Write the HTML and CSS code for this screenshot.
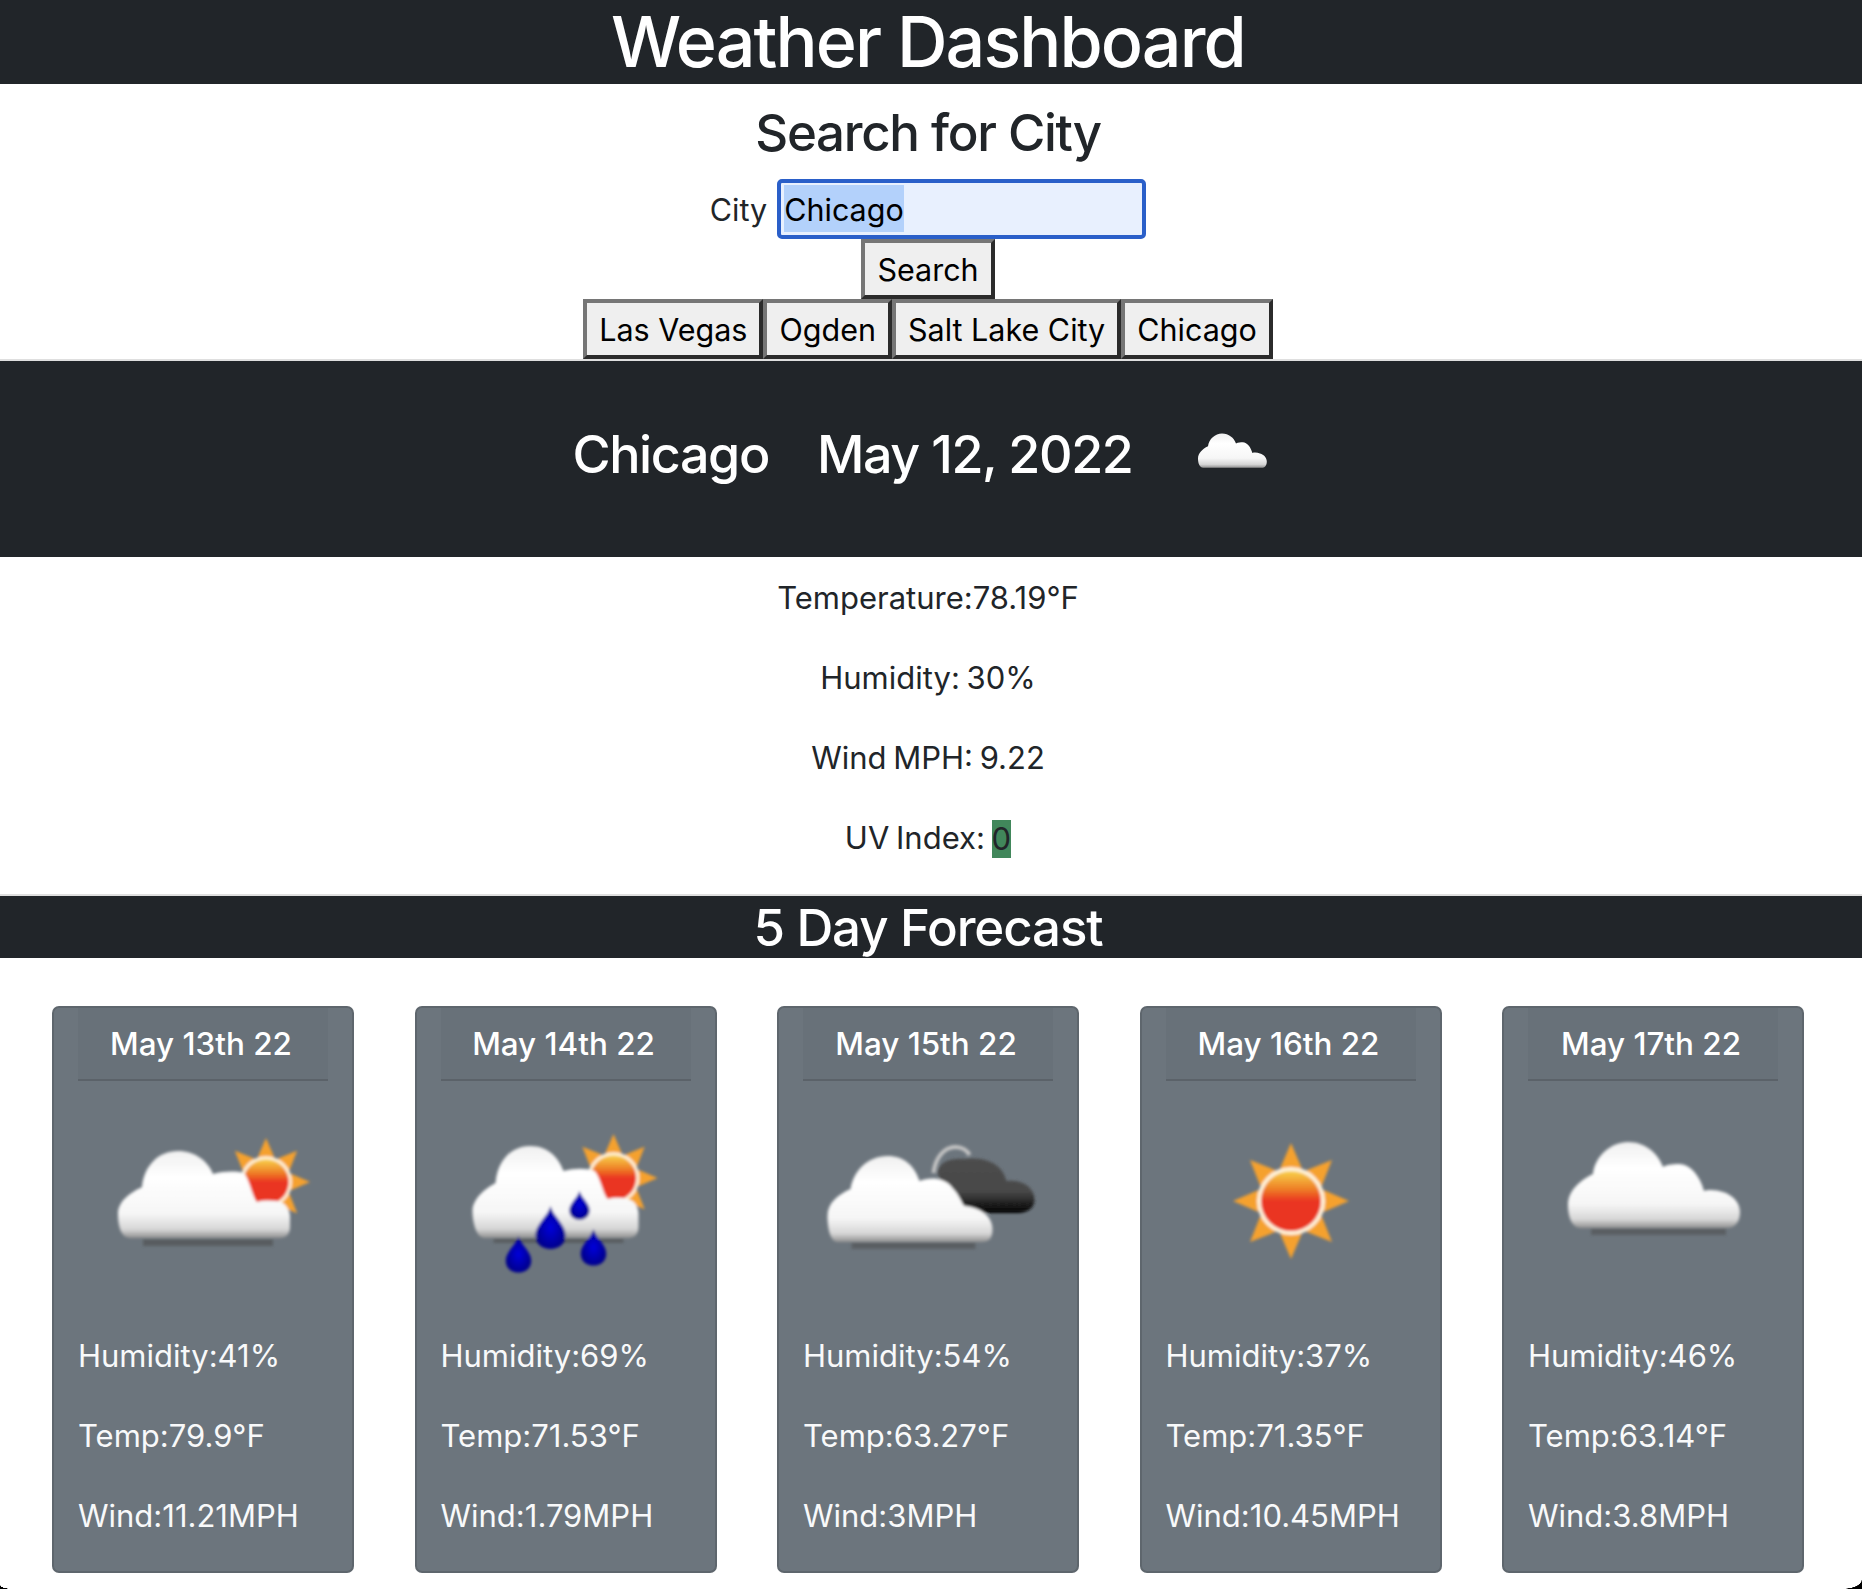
FILE: index.html
```html
<!DOCTYPE html>
<html lang="en">
<head>
  <meta charset="UTF-8" />
  <meta name="viewport" content="width=device-width, initial-scale=1.0"/>
  <title>Weather Dashboard</title>
  <link rel="stylesheet" href="styles.css">
</head>
<body>

<!-- shared icon parts -->
<svg class="icon-defs" width="0" height="0" aria-hidden="true">
  <defs>
    <filter id="soft" x="-20%" y="-20%" width="140%" height="140%"><feGaussianBlur stdDeviation="1.8"/></filter>
    <filter id="softer" x="-20%" y="-100%" width="140%" height="300%"><feGaussianBlur stdDeviation="1.6"/></filter>
    <linearGradient id="cloudFill" x1="0" y1="0" x2="0" y2="1">
      <stop offset="0" stop-color="#f0f0f0"/>
      <stop offset=".3" stop-color="#ffffff"/>
      <stop offset=".72" stop-color="#f6f6f6"/>
      <stop offset=".9" stop-color="#d6d6d6"/>
      <stop offset="1" stop-color="#909090"/>
    </linearGradient>
    <linearGradient id="darkFill" x1="0" y1="0" x2="0" y2="1">
      <stop offset="0" stop-color="#4c4c4c"/>
      <stop offset=".6" stop-color="#484848"/>
      <stop offset="1" stop-color="#000000"/>
    </linearGradient>
    <linearGradient id="sunFill" x1="0" y1="0" x2="0" y2="1">
      <stop offset="0" stop-color="#f8d24a"/>
      <stop offset=".3" stop-color="#ee7f26"/>
      <stop offset=".5" stop-color="#ea3520"/>
      <stop offset="1" stop-color="#ea3520"/>
    </linearGradient>
    <radialGradient id="dropFill">
      <stop offset="0" stop-color="#0000dc"/>
      <stop offset="1" stop-color="#00008c"/>
    </radialGradient>
    <g id="sun">
      <polygon fill="#f5a12e" points="0,-58 12.2,-29.6 41,-41 29.6,-12.2 58,0 29.6,12.2 41,41 12.2,29.6 0,58 -12.2,29.6 -41,41 -29.6,12.2 -58,0 -29.6,-12.2 -41,-41 -12.2,-29.6"/>
      <circle r="34" fill="#fff3dc"/>
      <circle r="30" fill="url(#sunFill)"/>
    </g>
    <path id="drop" fill="url(#dropFill)" d="M0 -27 C3 -16 15 -9 15 2 C15 11 8 16 0 16 C-8 16 -15 11 -15 2 C-15 -9 -3 -16 0 -27Z"/>
    <path id="bigCloud" fill="url(#cloudFill)" d="M48 117 C38 117 35 104 35 94 C35 80 46 70 60 63 C62 45 78 31 95 31 C112 31 125 42 130 56 C135 53 142 53 147 53 C158 54 167 65 171 80 C176 78 184 79 190 81 C200 84 207 92 207 101 C207 111 202 117 194 117Z"/>
  </defs>
</svg>

<header class="top-bar">
  <h1>Weather Dashboard</h1>
</header>

<section class="search">
  <h2>Search for City</h2>
  <div class="search-row">
    <label for="city">City</label>
    <div class="city-input" id="city"><span class="selected">Chicago</span></div>
  </div>
  <button class="btn">Search</button>
  <div class="history">
    <button class="btn">Las Vegas</button>
    <button class="btn">Ogden</button>
    <button class="btn">Salt Lake City</button>
    <button class="btn">Chicago</button>
  </div>
</section>

<hr class="rule">

<section class="current">
  <h2>Chicago</h2>
  <h2>May 12, 2022</h2>
  <svg class="current-icon" viewBox="1193 428 90 54" width="90" height="54" aria-label="clouds">
    <g filter="url(#soft)" transform="translate(1184 421) scale(.4)"><use href="#bigCloud"/></g>
  </svg>
</section>

<section class="details">
  <p>Temperature:78.19°F</p>
  <p>Humidity: 30%</p>
  <p>Wind MPH: 9.22</p>
  <p>UV Index: <span class="uv">0</span></p>
</section>

<hr class="rule">

<section class="forecast-bar">
  <h2>5 Day Forecast</h2>
</section>

<section class="forecast">

  <div class="card">
    <div class="card-header">May 13th 22</div>
    <svg class="card-icon" viewBox="-17 0 240 170" width="240" height="170" aria-label="few clouds">
      <rect x="43" y="128" width="130" height="7" fill="#4a4a4a" opacity=".55" filter="url(#softer)"/>
      <g filter="url(#soft)">
        <use href="#sun" transform="translate(166 71) scale(.76)"/>
        <path fill="url(#cloudFill)" d="M30 127 C20 127 18 112 18 103 C18 90 30 82 42 76 C44 55 58 40 78 40 C95 40 108 50 113 63 C125 60 135 60 144 62 C150 70 152 85 157 91 C165 89 175 89 183 92 C187 95 190 100 190 106 V116 C190 123 186 127 180 127Z"/>
      </g>
    </svg>
    <p>Humidity:41%</p>
    <p>Temp:79.9°F</p>
    <p>Wind:11.21MPH</p>
  </div>

  <div class="card">
    <div class="card-header">May 14th 22</div>
    <svg class="card-icon" viewBox="-4.5 0 240 170" width="240" height="170" aria-label="light rain">
      <rect x="43" y="127" width="130" height="5" fill="#4a4a4a" opacity=".55" filter="url(#softer)"/>
      <g filter="url(#soft)">
        <use href="#sun" transform="translate(163 67) scale(.76)"/>
        <path fill="url(#cloudFill)" d="M34 127 C26 127 22 112 22 100 C22 88 34 78 45 72 C47 50 60 35 80 35 C97 35 108 46 113 60 C125 57 135 57 144 60 C150 66 152 82 157 88 C165 86 175 86 182 90 C186 93 188 98 188 104 V116 C188 123 184 127 178 127Z"/>
        <use href="#drop" transform="translate(100 122)" />
        <use href="#drop" transform="translate(129 98) scale(.68)"/>
        <use href="#drop" transform="translate(68 148) scale(.85)"/>
        <use href="#drop" transform="translate(143 141) scale(.85)"/>
      </g>
    </svg>
    <p>Humidity:69%</p>
    <p>Temp:71.53°F</p>
    <p>Wind:1.79MPH</p>
  </div>

  <div class="card">
    <div class="card-header">May 15th 22</div>
    <svg class="card-icon" viewBox="-1.5 0 240 170" width="240" height="170" aria-label="few clouds at night">
      <rect x="42" y="131" width="124" height="7" fill="#4a4a4a" opacity=".5" filter="url(#softer)"/>
      <g filter="url(#soft)">
        <path fill="none" stroke="#c4c4c4" stroke-width="4" d="M124 62 C126 46 135 36 146 36 C153 36 158 40 160 44"/>
        <path fill="url(#darkFill)" d="M128 62 C130 50 142 47 155 48 C172 46 192 50 197 70 C212 68 225 76 225 89 C225 97 218 102 208 102 H160 L135 80Z"/>
        <path fill="url(#cloudFill)" d="M28 131 C20 131 18 114 18 105 C18 92 28 84 41 78 C44 60 58 45 78 45 C95 45 105 55 110 70 C120 66 135 66 143 77 C150 84 152 92 155 95 C170 96 183 105 183 118 C183 127 180 131 172 131Z"/>
      </g>
    </svg>
    <p>Humidity:54%</p>
    <p>Temp:63.27°F</p>
    <p>Wind:3MPH</p>
  </div>

  <div class="card">
    <div class="card-header">May 16th 22</div>
    <svg class="card-icon" viewBox="0 0 240 170" width="240" height="170" aria-label="clear sky">
      <g filter="url(#soft)">
        <use href="#sun" transform="translate(120 90)"/>
      </g>
    </svg>
    <p>Humidity:37%</p>
    <p>Temp:71.35°F</p>
    <p>Wind:10.45MPH</p>
  </div>

  <div class="card">
    <div class="card-header">May 17th 22</div>
    <svg class="card-icon" viewBox="0 0 240 170" width="240" height="170" aria-label="clouds">
      <rect x="58" y="117" width="135" height="7" fill="#4a4a4a" opacity=".5" filter="url(#softer)"/>
      <g filter="url(#soft)"><use href="#bigCloud"/></g>
    </svg>
    <p>Humidity:46%</p>
    <p>Temp:63.14°F</p>
    <p>Wind:3.8MPH</p>
  </div>

</section>

<!-- window corners from the capture -->
<div class="corner corner-left"></div>
<div class="corner corner-right"></div>

</body>
</html>
```

FILE: styles.css
```css
* {
  box-sizing: border-box;
}

html, body {
  height: 1589px;
  overflow: hidden;
}

body {
  margin: 0;
  position: relative;
  background: #fff;
  color: #212529;
  font-family: Inter, 'Noto Sans', sans-serif;
  font-size: 31px;
  line-height: 43px;
}

h1, h2, p {
  margin: 0;
  font-weight: 500;
}

.icon-defs {
  position: absolute;
}

.top-bar {
  height: 84px;
  padding-right: 6px;
  background: #212529;
  color: #fff;
  text-align: center;
}

.top-bar h1 {
  font-size: 70px;
  letter-spacing: -1.9px;
  line-height: 84px;
}

.search {
  display: flex;
  flex-direction: column;
  align-items: center;
  height: 275px;
  padding: 18px 6px 0 0;
}

.search h2 {
  font-size: 51px;
  letter-spacing: -1.3px;
  line-height: 61px;
  margin-bottom: 16px;
}

.search-row {
  display: flex;
  align-items: center;
  gap: 10px;
  height: 61px;
  font-size: 30.5px;
}

.city-input {
  width: 369px;
  height: 60px;
  padding: 2px 3px;
  border: 4px solid #2a5fc9;
  border-radius: 5px;
  background: #e8f0fe;
  color: #000;
  line-height: 49px;
}

.selected {
  display: inline-block;
  height: 47px;
  background: #b3d1fb;
}

.btn {
  height: 60px;
  padding: 0 12px;
  border: 4px solid;
  border-color: #767676 #2b2b2b #2b2b2b #767676;
  background: #efefef;
  color: #000;
  font-family: inherit;
  font-size: 30.5px;
}

.history {
  display: flex;
}

.rule {
  height: 2px;
  margin: 0;
  border: 0;
  background: #dfdfdf;
}

.current {
  display: flex;
  justify-content: center;
  align-items: center;
  gap: 48px;
  height: 196px;
  padding: 0 6px 8px 0;
  background: #212529;
  color: #fff;
}

.current h2 {
  font-size: 52px;
  letter-spacing: -1.4px;
  line-height: 60px;
}

.current-icon {
  margin-left: 13px;
}

.details {
  display: flex;
  flex-direction: column;
  gap: 37px;
  height: 337px;
  padding: 19px 6px 0 0;
  text-align: center;
  word-spacing: -2px;
}

.details p {
  font-weight: 400;
}

.uv {
  display: inline-block;
  height: 38px;
  background: #41875b;
  line-height: 38px;
  vertical-align: -1px;
}

.forecast-bar {
  height: 62px;
  padding-right: 6px;
  background: #212529;
  color: #fff;
  text-align: center;
}

.forecast-bar h2 {
  font-size: 51px;
  letter-spacing: -1.1px;
  line-height: 64px;
}

.forecast {
  display: grid;
  grid-template-columns: repeat(5, 302px);
  gap: 60.5px;
  padding: 47.5px 0 0 52px;
}

.card {
  display: flex;
  flex-direction: column;
  height: 567px;
  padding: 0 24px;
  border: 2px solid rgba(0, 0, 0, 0.125);
  border-radius: 7px;
  background: #6c757d;
  color: #f8f9fa;
}

.card-header {
  height: 73px;
  margin-bottom: 30px;
  padding-right: 4px;
  border-bottom: 2px solid rgba(0, 0, 0, 0.125);
  background: rgba(0, 0, 0, 0.03);
  color: #fff;
  font-size: 31.4px;
  font-weight: 500;
  line-height: 72px;
  text-align: center;
}

.card-icon {
  flex: none;
  align-self: center;
  margin-bottom: 53px;
}

.card p {
  margin-bottom: 37px;
  font-weight: 400;
}

.corner {
  position: absolute;
  bottom: 0;
}

.corner-left {
  left: 0;
  width: 13px;
  height: 4px;
  background: radial-gradient(ellipse 13px 4px at 100% 0, transparent 96%, #000 100%);
}

.corner-right {
  right: 0;
  width: 20px;
  height: 9px;
  background: radial-gradient(ellipse 20px 9px at 0 0, transparent 96%, #000 100%);
}
```
